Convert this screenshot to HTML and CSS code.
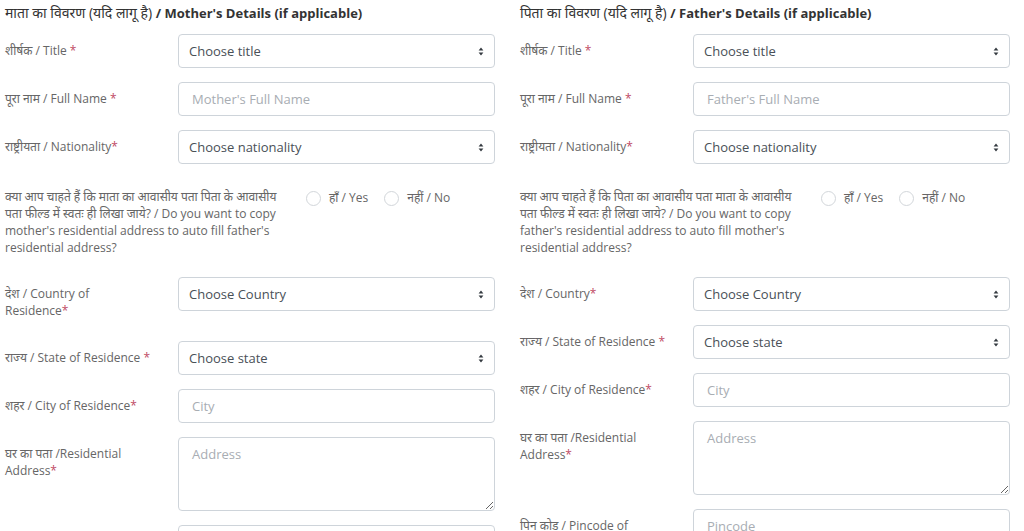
FILE: index.html
```html
<!DOCTYPE html>
<html lang="hi">
<head>
<meta charset="utf-8">
<title>Parent Details</title>
<link rel="stylesheet" href="styles.css">
</head>
<body>
<div class="page">
  <section class="col">
    <h3 class="heading">माता का विवरण (यदि लागू है) <b>/ Mother's Details (if applicable)</b></h3>
    <div class="row">
      <label class="lbl">शीर्षक / Title <span class="req">*</span></label>
      <div class="sel"><select class="ctl"><option>Choose title</option></select><svg class="arr" width="6" height="9" viewBox="0 0 6 9"><path d="M3 0.6L5.4 3.5H0.6Z M3 8.4L5.4 5.5H0.6Z" fill="#343a40"/></svg></div>
    </div>
    <div class="row">
      <label class="lbl">पूरा नाम / Full Name <span class="req">*</span></label>
      <input class="ctl" placeholder="Mother's Full Name">
    </div>
    <div class="row">
      <label class="lbl">राष्ट्रीयता / Nationality<span class="req">*</span></label>
      <div class="sel"><select class="ctl"><option>Choose nationality</option></select><svg class="arr" width="6" height="9" viewBox="0 0 6 9"><path d="M3 0.6L5.4 3.5H0.6Z M3 8.4L5.4 5.5H0.6Z" fill="#343a40"/></svg></div>
    </div>
    <div class="qrow">
      <p class="qtext">क्या आप चाहते हैं कि माता का आवासीय पता पिता के आवासीय पता फील्ड में स्वतः ही लिखा जाये? / Do you want to copy mother's residential address to auto fill father's residential address?</p>
      <div class="radios">
        <label class="radio"><span class="dot"></span>हाँ / Yes</label>
        <label class="radio"><span class="dot"></span>नहीं / No</label>
      </div>
    </div>
    <div class="row">
      <label class="lbl">देश / Country of Residence<span class="req">*</span></label>
      <div class="sel"><select class="ctl"><option>Choose Country</option></select><svg class="arr" width="6" height="9" viewBox="0 0 6 9"><path d="M3 0.6L5.4 3.5H0.6Z M3 8.4L5.4 5.5H0.6Z" fill="#343a40"/></svg></div>
    </div>
    <div class="row">
      <label class="lbl">राज्य / State of Residence <span class="req">*</span></label>
      <div class="sel"><select class="ctl"><option>Choose state</option></select><svg class="arr" width="6" height="9" viewBox="0 0 6 9"><path d="M3 0.6L5.4 3.5H0.6Z M3 8.4L5.4 5.5H0.6Z" fill="#343a40"/></svg></div>
    </div>
    <div class="row">
      <label class="lbl">शहर / City of Residence<span class="req">*</span></label>
      <input class="ctl" placeholder="City">
    </div>
    <div class="row">
      <label class="lbl">घर का पता /Residential Address<span class="req">*</span></label>
      <textarea class="ctl area" placeholder="Address"></textarea>
    </div>
    <div class="row">
      <label class="lbl">पिन कोड / Pincode of Residence<span class="req">*</span></label>
      <input class="ctl" placeholder="Pincode">
    </div>
  </section>

  <section class="col">
    <h3 class="heading">पिता का विवरण (यदि लागू है) <b>/ Father's Details (if applicable)</b></h3>
    <div class="row">
      <label class="lbl">शीर्षक / Title <span class="req">*</span></label>
      <div class="sel"><select class="ctl"><option>Choose title</option></select><svg class="arr" width="6" height="9" viewBox="0 0 6 9"><path d="M3 0.6L5.4 3.5H0.6Z M3 8.4L5.4 5.5H0.6Z" fill="#343a40"/></svg></div>
    </div>
    <div class="row">
      <label class="lbl">पूरा नाम / Full Name <span class="req">*</span></label>
      <input class="ctl" placeholder="Father's Full Name">
    </div>
    <div class="row">
      <label class="lbl">राष्ट्रीयता / Nationality<span class="req">*</span></label>
      <div class="sel"><select class="ctl"><option>Choose nationality</option></select><svg class="arr" width="6" height="9" viewBox="0 0 6 9"><path d="M3 0.6L5.4 3.5H0.6Z M3 8.4L5.4 5.5H0.6Z" fill="#343a40"/></svg></div>
    </div>
    <div class="qrow">
      <p class="qtext">क्या आप चाहते हैं कि पिता का आवासीय पता माता के आवासीय पता फील्ड में स्वतः ही लिखा जाये? / Do you want to copy father's residential address to auto fill mother's residential address?</p>
      <div class="radios">
        <label class="radio"><span class="dot"></span>हाँ / Yes</label>
        <label class="radio"><span class="dot"></span>नहीं / No</label>
      </div>
    </div>
    <div class="row">
      <label class="lbl">देश / Country<span class="req">*</span></label>
      <div class="sel"><select class="ctl"><option>Choose Country</option></select><svg class="arr" width="6" height="9" viewBox="0 0 6 9"><path d="M3 0.6L5.4 3.5H0.6Z M3 8.4L5.4 5.5H0.6Z" fill="#343a40"/></svg></div>
    </div>
    <div class="row">
      <label class="lbl">राज्य / State of Residence <span class="req">*</span></label>
      <div class="sel"><select class="ctl"><option>Choose state</option></select><svg class="arr" width="6" height="9" viewBox="0 0 6 9"><path d="M3 0.6L5.4 3.5H0.6Z M3 8.4L5.4 5.5H0.6Z" fill="#343a40"/></svg></div>
    </div>
    <div class="row">
      <label class="lbl">शहर / City of Residence<span class="req">*</span></label>
      <input class="ctl" placeholder="City">
    </div>
    <div class="row">
      <label class="lbl">घर का पता /Residential Address<span class="req">*</span></label>
      <textarea class="ctl area" placeholder="Address"></textarea>
    </div>
    <div class="row">
      <label class="lbl">पिन कोड / Pincode of Residence<span class="req">*</span></label>
      <input class="ctl" placeholder="Pincode">
    </div>
  </section>
</div>
</body>
</html>
```

FILE: styles.css
```css
* { box-sizing: border-box; }
html, body { margin: 0; padding: 0; background: #fff; }
body {
  font-family: "Open Sans", "Noto Sans", sans-serif;
  color: #666;
  overflow: hidden;
  height: 531px;
}
.page {
  display: flex;
  gap: 25px;
  padding-left: 5px;
  width: 1010px;
}
.col {
  width: 490px;
  flex: none;
  display: flex;
  flex-direction: column;
}
.heading {
  margin: 0 0 8px 0;
  font-size: 14px;
  line-height: 26px;
  font-weight: 400;
  color: #333;
  white-space: nowrap;
}
.heading b { font-weight: 700; font-size: 13px; }
.row {
  display: grid;
  grid-template-columns: 173px 1fr;
  align-items: start;
  margin-bottom: 14px;
}
.lbl {
  font-size: 12px;
  line-height: 17px;
  padding: 8px 25px 8px 0;
  color: #666;
}
.req { color: #c04a64; }
.ctl {
  display: block;
  width: 100%;
  height: 34px;
  margin: 0;
  border: 1px solid #ced4da;
  border-radius: 4px;
  background: #fff;
  font-family: "Open Sans", "Noto Sans", sans-serif;
  font-size: 13px;
  color: #495057;
  padding: 0 10px;
  outline: none;
}
.ctl::placeholder { color: #a8adb3; }
select.ctl {
  appearance: none;
  -webkit-appearance: none;
}
.sel { position: relative; }
.arr {
  position: absolute;
  right: 11px;
  top: 13px;
  pointer-events: none;
}
.area {
  height: 74px;
  padding: 7px 13px;
  resize: vertical;
  line-height: 18px;
}
input.ctl { padding: 0 13px; }
.qrow {
  display: flex;
  align-items: flex-start;
  margin-bottom: 14px;
  padding: 10px 0 7px 0;
}
.qtext {
  margin: 0;
  width: 275px;
  font-size: 12px;
  line-height: 17px;
  color: #666;
}
.radios {
  display: flex;
  gap: 16px;
  margin-left: 26px;
  margin-top: 2px;
}
.radio {
  display: flex;
  align-items: center;
  gap: 8px;
  font-size: 12px;
  line-height: 16px;
  color: #666;
}
.dot {
  width: 15px;
  height: 15px;
  border: 1px solid #d2d6da;
  border-radius: 50%;
  background: #fff;
  flex: none;
}
```
